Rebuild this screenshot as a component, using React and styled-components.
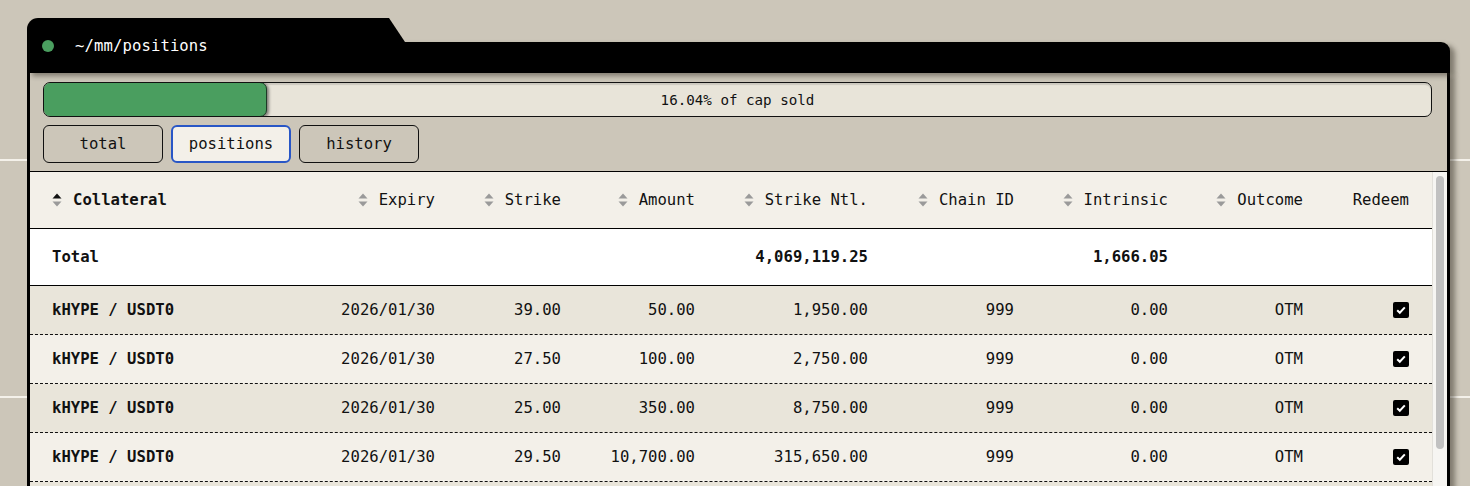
import React from 'react';
import styled, { createGlobalStyle } from 'styled-components';

const MONO = '"DejaVu Sans Mono", "Liberation Mono", monospace';

const GlobalStyle = createGlobalStyle`
  html, body {
    margin: 0;
    padding: 0;
  }
  body {
    height: 486px;
    overflow: hidden;
    background-color: #ccc6b9;
    background-image: linear-gradient(to bottom, #f4f1ea 0 2px, transparent 2px 100%);
    background-size: 100% 237px;
    background-position: 0 159px;
    font-family: ${MONO};
    color: #111;
  }
`;

const Page = styled.div`
  padding: 18px 20px 0 27px;
`;

const Window = styled.div`
  display: flex;
  flex-direction: column;
`;

const TitleBar = styled.div`
  position: relative;
  height: 55px;
  display: flex;
  align-items: center;
  gap: 21px;
  padding-left: 15px;
  color: #fff;
  font-size: 15.6px;

  &::before {
    content: '';
    position: absolute;
    left: 0;
    right: 0;
    top: 24px;
    bottom: 0;
    background: #000;
    border-radius: 0 9px 0 0;
    box-shadow: 5px 3px 5px rgba(40, 35, 25, 0.45);
  }

  &::after {
    content: '';
    position: absolute;
    left: 0;
    top: 0;
    width: 378px;
    height: 30px;
    background: #000;
    border-radius: 11px 6px 0 0;
    clip-path: polygon(0 0, 362px 0, 378px 24px, 378px 30px, 0 30px);
  }
`;

const Dot = styled.span`
  position: relative;
  z-index: 1;
  flex-shrink: 0;
  width: 12px;
  height: 12px;
  border-radius: 50%;
  background: #4a9e5f;
`;

const Title = styled.span`
  position: relative;
  z-index: 1;
  letter-spacing: 0.1px;
`;

const Body = styled.div`
  background: #ccc6b9;
  border-left: 3px solid #000;
  border-right: 3px solid #000;
  box-shadow: 5px 3px 5px rgba(40, 35, 25, 0.45);
`;

const Controls = styled.div`
  display: flex;
  flex-direction: column;
  gap: 8px;
  padding: 9px 15px 8px 13px;
`;

const Progress = styled.div`
  position: relative;
  height: 33px;
  border: 1px solid #111;
  border-radius: 7px;
  background: #e8e4d9;
  display: flex;
  align-items: center;
  justify-content: center;
  overflow: hidden;
  box-shadow: inset 0 2px 1px rgba(0, 0, 0, 0.12);
`;

const ProgressFill = styled.div`
  position: absolute;
  left: -1px;
  top: -1px;
  bottom: -1px;
  background: #4a9e5f;
  border: 1px solid #1d3a26;
  border-radius: 7px;
  box-shadow: 2px 1px 3px rgba(0, 0, 0, 0.45);
`;

const ProgressLabel = styled.span`
  position: relative;
  font-size: 14.2px;
`;

const Tabs = styled.div`
  display: flex;
  gap: 8px;
`;

const Tab = styled.button`
  width: 120px;
  height: 38px;
  box-sizing: border-box;
  border-radius: 6px;
  font-family: ${MONO};
  font-size: 15.6px;
  color: #111;
  cursor: pointer;
  background: ${(p) => (p.$active ? '#f3f0e9' : 'transparent')};
  border: ${(p) => (p.$active ? '2px solid #2856c6' : '1px solid #111')};
  padding: 0;
`;

const TableWrap = styled.div`
  display: flex;
  border-top: 1px solid #000;
`;

const Table = styled.div`
  flex: 1;
  display: flex;
  flex-direction: column;
`;

const COLS = '198px 185px 126px 134px 173px 146px 154px 135px 106px';

const Row = styled.div`
  display: grid;
  grid-template-columns: ${COLS};
  align-items: center;
  padding: 0 23px 0 22px;
  height: ${(p) => (p.$kind === 'data' ? '48px' : '56px')};
  background: ${(p) =>
    p.$kind === 'head' ? '#f3f0e9' : p.$kind === 'total' ? '#ffffff' : p.$odd ? '#e9e5da' : '#f3f0e9'};
  border-bottom: ${(p) => (p.$kind === 'data' ? '1px dashed #111' : '1px solid #000')};
  font-size: 15.6px;
`;

const RowFill = styled.div`
  height: 20px;
  background: #e9e5da;
`;

const Cell = styled.div`
  display: flex;
  align-items: center;
  justify-content: ${(p) => (p.$left ? 'flex-start' : 'flex-end')};
  gap: 11px;
  font-weight: ${(p) => (p.$bold ? 700 : 400)};
  white-space: nowrap;
`;

const Check = styled.span`
  width: 16px;
  height: 16px;
  border-radius: 2px;
  background: #000;
  display: flex;
  align-items: center;
  justify-content: center;
`;

const Scrollbar = styled.div`
  width: 14px;
  background: #f6f5f2;
  border-left: 1px solid #e2e0da;
  display: flex;
  justify-content: center;
  padding-top: 4px;
`;

const Thumb = styled.div`
  width: 8px;
  height: 273px;
  border-radius: 4px;
  background: #c1c1c1;
`;

const SortIcon = ({ active }) => (
  <svg width="10" height="16" viewBox="0 0 10 16">
    <path d="M5 1.5 L9.5 6.5 L0.5 6.5 Z" fill={active ? '#111' : '#9a9a9a'} />
    <path d="M5 14.5 L9.5 9.5 L0.5 9.5 Z" fill="#9a9a9a" />
  </svg>
);

const columns = [
  { key: 'collateral', label: 'Collateral', left: true, sort: true, active: true },
  { key: 'expiry', label: 'Expiry', sort: true },
  { key: 'strike', label: 'Strike', sort: true },
  { key: 'amount', label: 'Amount', sort: true },
  { key: 'ntl', label: 'Strike Ntl.', sort: true },
  { key: 'chain', label: 'Chain ID', sort: true },
  { key: 'intrinsic', label: 'Intrinsic', sort: true },
  { key: 'outcome', label: 'Outcome', sort: true },
  { key: 'redeem', label: 'Redeem' },
];

const positions = [
  { strike: '39.00', amount: '50.00', ntl: '1,950.00' },
  { strike: '27.50', amount: '100.00', ntl: '2,750.00' },
  { strike: '25.00', amount: '350.00', ntl: '8,750.00' },
  { strike: '29.50', amount: '10,700.00', ntl: '315,650.00' },
];

const CheckBox = () => (
  <Check>
    <svg width="12" height="12" viewBox="0 0 12 12">
      <path d="M2.2 6.3 L4.8 8.8 L9.8 3.4" stroke="#fff" strokeWidth="2" fill="none" />
    </svg>
  </Check>
);

const App = () => {
  const pct = 16.04;

  return (
    <Page>
      <GlobalStyle />
      <Window>
        <TitleBar>
          <Dot />
          <Title>~/mm/positions</Title>
        </TitleBar>
        <Body>
          <Controls>
            <Progress>
              <ProgressFill style={{ width: `${pct}%` }} />
              <ProgressLabel>{pct}% of cap sold</ProgressLabel>
            </Progress>
            <Tabs>
              <Tab>total</Tab>
              <Tab $active>positions</Tab>
              <Tab>history</Tab>
            </Tabs>
          </Controls>
          <TableWrap>
            <Table>
              <Row $kind="head">
                {columns.map((c) => (
                  <Cell key={c.key} $left={c.left} $bold={c.active}>
                    {c.sort && <SortIcon active={c.active} />}
                    {c.label}
                  </Cell>
                ))}
              </Row>
              <Row $kind="total">
                <Cell $left $bold>Total</Cell>
                <Cell />
                <Cell />
                <Cell />
                <Cell $bold>4,069,119.25</Cell>
                <Cell />
                <Cell $bold>1,666.05</Cell>
                <Cell />
                <Cell />
              </Row>
              {positions.map((p, i) => (
                <Row key={i} $kind="data" $odd={i % 2 === 0}>
                  <Cell $left $bold>kHYPE / USDT0</Cell>
                  <Cell>2026/01/30</Cell>
                  <Cell>{p.strike}</Cell>
                  <Cell>{p.amount}</Cell>
                  <Cell>{p.ntl}</Cell>
                  <Cell>999</Cell>
                  <Cell>0.00</Cell>
                  <Cell>OTM</Cell>
                  <Cell>
                    <CheckBox />
                  </Cell>
                </Row>
              ))}
              <RowFill />
            </Table>
            <Scrollbar>
              <Thumb />
            </Scrollbar>
          </TableWrap>
        </Body>
      </Window>
    </Page>
  );
};

export default App;
